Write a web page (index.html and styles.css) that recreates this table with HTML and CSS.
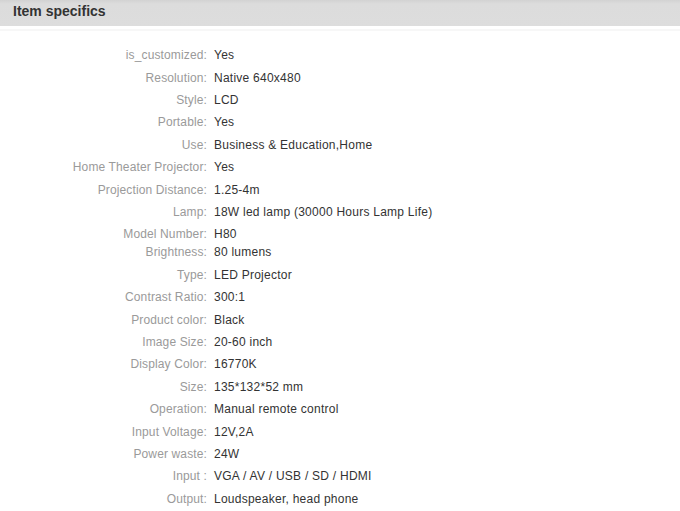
FILE: index.html
```html
<!DOCTYPE html>
<html>
<head>
<meta charset="utf-8">
<link rel="stylesheet" href="styles.css">
</head>
<body>
<div class="panel">
  <div class="header"><h2 class="title">Item specifics</h2></div>
  <div class="rule"></div>
  <div class="specs">
    <div class="row"><span class="label">is_customized:</span><span class="value">Yes</span></div>
    <div class="row"><span class="label">Resolution:</span><span class="value">Native 640x480</span></div>
    <div class="row"><span class="label">Style:</span><span class="value">LCD</span></div>
    <div class="row"><span class="label">Portable:</span><span class="value">Yes</span></div>
    <div class="row"><span class="label">Use:</span><span class="value">Business &amp; Education,Home</span></div>
    <div class="row"><span class="label">Home Theater Projector:</span><span class="value">Yes</span></div>
    <div class="row"><span class="label">Projection Distance:</span><span class="value">1.25-4m</span></div>
    <div class="row"><span class="label">Lamp:</span><span class="value">18W led lamp (30000 Hours Lamp Life)</span></div>
    <div class="row tight"><span class="label">Model Number:</span><span class="value">H80</span></div>
    <div class="row tight-next"><span class="label">Brightness:</span><span class="value">80 lumens</span></div>
    <div class="row"><span class="label">Type:</span><span class="value">LED Projector</span></div>
    <div class="row"><span class="label">Contrast Ratio:</span><span class="value">300:1</span></div>
    <div class="row"><span class="label">Product color:</span><span class="value">Black</span></div>
    <div class="row"><span class="label">Image Size:</span><span class="value">20-60 inch</span></div>
    <div class="row"><span class="label">Display Color:</span><span class="value">16770K</span></div>
    <div class="row"><span class="label">Size:</span><span class="value">135*132*52 mm</span></div>
    <div class="row"><span class="label">Operation:</span><span class="value">Manual remote control</span></div>
    <div class="row"><span class="label">Input Voltage:</span><span class="value">12V,2A</span></div>
    <div class="row"><span class="label">Power waste:</span><span class="value">24W</span></div>
    <div class="row"><span class="label">Input :</span><span class="value">VGA / AV / USB / SD / HDMI</span></div>
    <div class="row"><span class="label">Output:</span><span class="value">Loudspeaker, head phone</span></div>
  </div>
</div>
</body>
</html>
```
FILE: styles.css
```css
html, body {
  margin: 0;
  padding: 0;
  background: #ffffff;
}
.panel {
  font-family: "Liberation Sans", Arial, sans-serif;
}
.header {
  height: 26px;
  background: linear-gradient(#d2d2d2 0px, #dcdcdc 4px, #dddddd 100%);
  padding-left: 13px;
  display: flex;
  align-items: center;
}
.title {
  margin: 0;
  font-size: 14px;
  font-weight: bold;
  color: #333333;
  line-height: 16px;
  padding-bottom: 4px;
}
.rule {
  height: 2px;
  margin-top: 3px;
  background: #f7f7f7;
}
.specs {
  padding-top: 13px;
  display: flex;
  flex-direction: column;
}
.row {
  display: flex;
  height: 22.4px;
  align-items: center;
  font-size: 12px;
  line-height: 14px;
}
.row.tight {
  height: 21.6px;
}
.row.tight-next {
  height: 20px;
  margin-top: -3.2px;
  margin-bottom: 2.2px;
}
.label {
  width: 207px;
  text-align: right;
  color: #9a9a9a;
  letter-spacing: 0.13px;
  flex: none;
}
.value {
  margin-left: 7px;
  color: #333333;
  letter-spacing: 0.25px;
}
```
